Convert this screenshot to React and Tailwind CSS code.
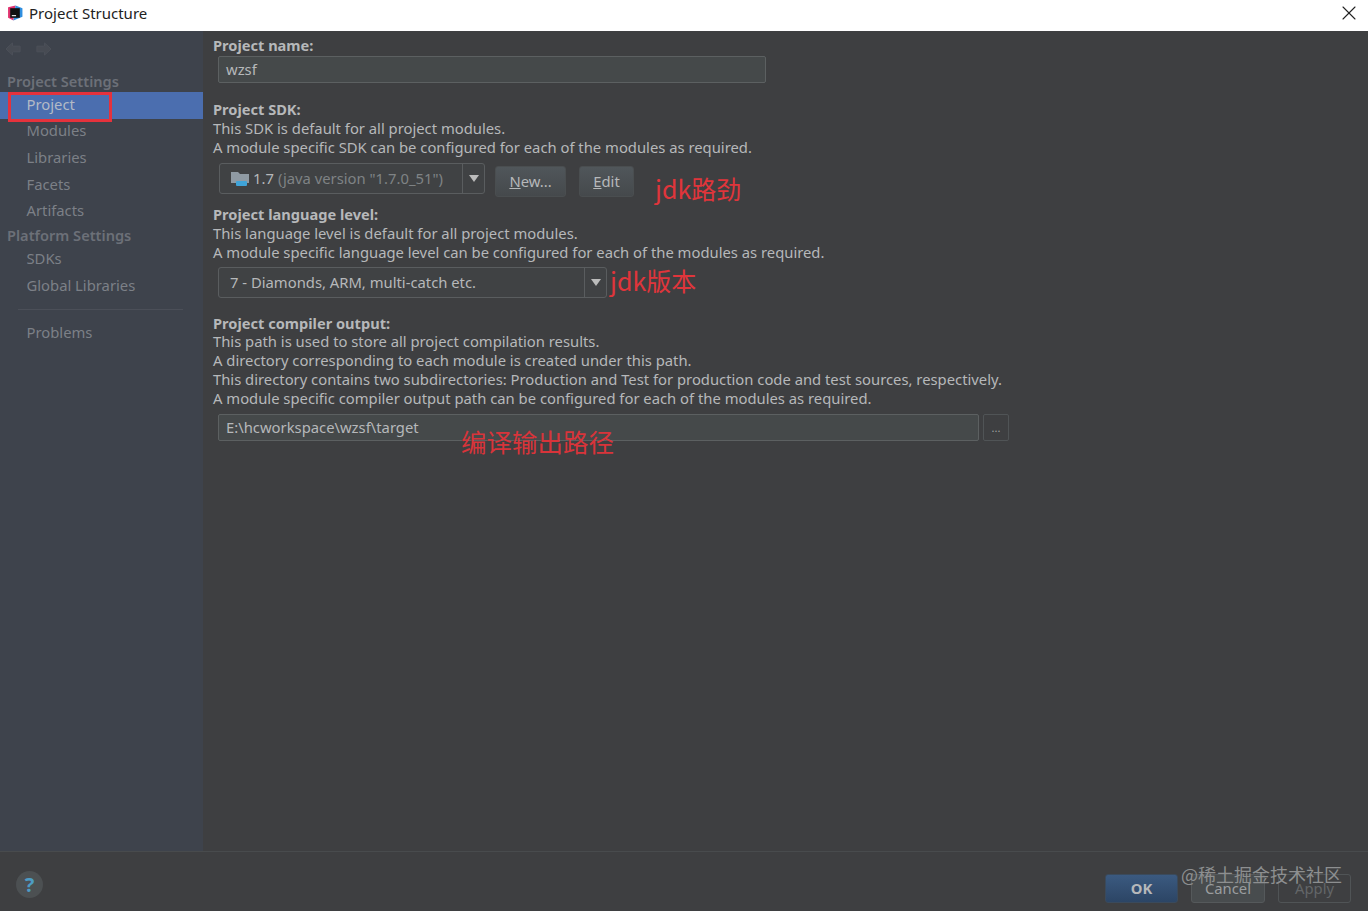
import { X } from "lucide-react";

const font = { fontFamily: '"Noto Sans", "Noto Sans CJK SC", sans-serif' };

const navClass = "h-[26.7px] pl-[26.5px] flex items-center text-[14.8px] text-[#7c8087]";
const headClass = "pl-[7px] text-[14.6px] font-semibold text-[#6c7078] leading-[20px]";
const cjk = { fontFamily: '"Noto Sans CJK SC", sans-serif' };

function Arrow() {
  return <span className="w-0 h-0 border-x-[5px] border-x-transparent border-t-[7px] border-t-[#bbbbbb]" />;
}

function NavArrow({ flip }) {
  return (
    <svg width="17" height="16" viewBox="0 0 18 16" className={flip ? "rotate-180" : ""}>
      <path d="M1 8 L8 1.5 V5 H16 V11 H8 V14.5 Z" fill="#474b53" stroke="#4d5159" />
    </svg>
  );
}

function Section({ title, lines, titleLeading = "leading-[19px]" }) {
  return (
    <div className="text-[14.8px] leading-[19px] text-[#b6b8ba]">
      <div className={`font-bold text-[14.6px] ${titleLeading}`}>{title}</div>
      {lines.map((l) => (
        <div key={l}>{l}</div>
      ))}
    </div>
  );
}

function Field({ width, children }) {
  return (
    <div className={`${width} h-[27px] ml-[5px] pl-[7px] flex items-center text-[14.8px] text-[#b6b8ba] bg-[#45494a] border border-[#5c6061] rounded-[2px]`}>
      {children}
    </div>
  );
}

function Combo({ width, ml, children }) {
  return (
    <div className={`${width} ${ml} h-[31px] flex items-center border border-[#5a5d5f] rounded-[3px] bg-[#404244]`}>
      <div className="flex-1 h-full pl-[11px] flex items-center text-[14.8px] text-[#b6b8ba]">{children}</div>
      <div className="w-[22px] h-full border-l border-[#5a5d5f] flex items-center justify-center">
        <Arrow />
      </div>
    </div>
  );
}

function Btn({ w, children }) {
  return (
    <div className={`${w} h-[31px] flex items-center justify-center text-[14.8px] text-[#b6b8ba] rounded-[3px] border border-[#4a4e50] bg-gradient-to-b from-[#50565a] to-[#45494c]`}>
      {children}
    </div>
  );
}

export default function App() {
  return (
    <div className="relative w-[1368px] h-[911px] overflow-hidden flex flex-col bg-[#3e3f41]" style={font}>
      <div className="h-[31px] shrink-0 bg-white flex items-center pl-[7px] pr-[7px] pb-[5px]">
        <svg width="16" height="16" viewBox="0 0 15 15">
          <path d="M1 2 L8 0.5 L6 14.5 L1 12 Z" fill="#e0336f" />
          <path d="M8 0.5 L14.5 3 L14.5 11 L6 14.5 Z" fill="#2f8fe0" />
          <rect x="3" y="3" width="9" height="9" fill="#111" />
          <rect x="4.5" y="9.5" width="4" height="1" fill="#fff" />
        </svg>
        <span className="ml-[6px] text-[15px] text-[#222222]">Project Structure</span>
        <X size={24} strokeWidth={1.1} className="ml-auto text-[#222222]" />
      </div>

      <div className="flex-1 flex min-h-0">
        <div className="w-[203px] shrink-0 bg-[#3e434c]">
          <div className="h-[40px] pl-[5px] pb-[4px] flex items-center gap-[13px]">
            <NavArrow />
            <NavArrow flip />
          </div>
          <div className={headClass}>Project Settings</div>
          <div className="h-[27px] pl-[26.5px] flex items-center text-[14.8px] text-[#b3bac6] bg-[#4b6eaf] relative mt-[1px]">
            <span className="-mt-[2px]">Project</span>
            <div className="absolute left-[8px] top-0 w-[104px] h-[30px] border-[3px] border-[#e5323c]" />
          </div>
          <div className={`${navClass} -mt-[2px]`}>Modules</div>
          <div className={navClass}>Libraries</div>
          <div className={navClass}>Facets</div>
          <div className={navClass}>Artifacts</div>
          <div className={`${headClass} mt-[1px]`}>Platform Settings</div>
          <div className={navClass}>SDKs</div>
          <div className={navClass}>Global Libraries</div>
          <div className="h-px ml-[18px] mr-[20px] mt-[11px] mb-[9px] bg-[#4b4f58]" />
          <div className={navClass}>Problems</div>
        </div>

        <div className="flex-1 pl-[10px] pt-[5px]">
          <div className="text-[14.6px] leading-[19px] mb-[1px] font-bold text-[#b6b8ba]">Project name:</div>
          <Field width="w-[548px]">wzsf</Field>

          <div className="mt-[17px]">
            <Section
              title="Project SDK:"
              lines={[
                "This SDK is default for all project modules.",
                "A module specific SDK can be configured for each of the modules as required.",
              ]}
            />
          </div>
          <div className="mt-[6px] flex items-start">
            <Combo width="w-[266px]" ml="ml-[6px]">
              <svg width="19" height="17" viewBox="0 0 19 17" className="mr-[3px]">
                <path d="M0 2 H7 L9 4 H18 V13 H0 Z" fill="#8f9aa3" />
                <rect x="5" y="11" width="11" height="5" rx="1" fill="#3fa3d8" />
              </svg>
              <span>1.7</span>
              <span className="ml-[4px] text-[#7f8385]">(java version "1.7.0_51")</span>
            </Combo>
            <div className="ml-[10px] mt-[3px]">
              <Btn w="w-[71px]">
                <span><u>N</u>ew...</span>
              </Btn>
            </div>
            <div className="ml-[13px] mt-[3px]">
              <Btn w="w-[55px]">
                <span><u>E</u>dit</span>
              </Btn>
            </div>
          </div>

          <div className="mt-[8px]">
            <Section
              title="Project language level:"
              lines={[
                "This language level is default for all project modules.",
                "A module specific language level can be configured for each of the modules as required.",
              ]}
            />
          </div>
          <div className="mt-[5px]">
            <Combo width="w-[389px]" ml="ml-[5px]">7 - Diamonds, ARM, multi-catch etc.</Combo>
          </div>

          <div className="mt-[16px]">
            <Section
              title="Project compiler output:"
              titleLeading="leading-[18px]"
              lines={[
                "This path is used to store all project compilation results.",
                "A directory corresponding to each module is created under this path.",
                "This directory contains two subdirectories: Production and Test for production code and test sources, respectively.",
                "A module specific compiler output path can be configured for each of the modules as required.",
              ]}
            />
          </div>
          <div className="mt-[6px] flex items-center">
            <Field width="w-[761px]">E:\hcworkspace\wzsf\target</Field>
            <div className="ml-[4px] w-[26px] h-[27px] flex items-center justify-center border border-[#505456] rounded-[2px] text-[11px] leading-none text-[#a0a0a0]">...</div>
          </div>
        </div>
      </div>

      <div className="h-[60px] shrink-0 border-t border-[#484b4d] flex items-center pl-[16px] pr-[17px] bg-[#3e3f41]">
        <div className="w-[27px] h-[27px] mt-[6px] rounded-full bg-[#4c5052] flex items-center justify-center text-[20px] font-bold leading-none text-[#4d9cc4]">?</div>
        <div className="ml-auto flex gap-[13px] mt-[13px]">
          <div className="w-[73px] h-[29px] rounded-[3px] border border-[#3a4a5c] bg-gradient-to-b from-[#3b5a80] to-[#2c4565] text-[14.8px] font-bold text-[#b6b8ba] flex items-center justify-center">OK</div>
          <div className="w-[74px] h-[29px] rounded-[3px] border border-[#55595b] bg-[#484c4e] text-[14.8px] text-[#9a9d9f] flex items-center justify-center">Cancel</div>
          <div className="w-[73px] h-[29px] rounded-[3px] border border-[#505456] text-[14.8px] text-[#636668] flex items-center justify-center">Apply</div>
        </div>
      </div>

      <div className="absolute left-[655px] top-[170px] text-[25px] leading-[36px] text-[#e0353b]" style={cjk}>jdk路劲</div>
      <div className="absolute left-[610px] top-[262px] text-[25px] leading-[36px] text-[#e0353b]" style={cjk}>jdk版本</div>
      <div className="absolute left-[461px] top-[423px] text-[25.5px] leading-[36px] text-[#d8343a]" style={cjk}>编译输出路径</div>
      <div className="absolute left-[1181px] top-[861px] text-[18px] leading-[26px] text-[#8d8f90]" style={cjk}>@稀土掘金技术社区</div>
    </div>
  );
}
